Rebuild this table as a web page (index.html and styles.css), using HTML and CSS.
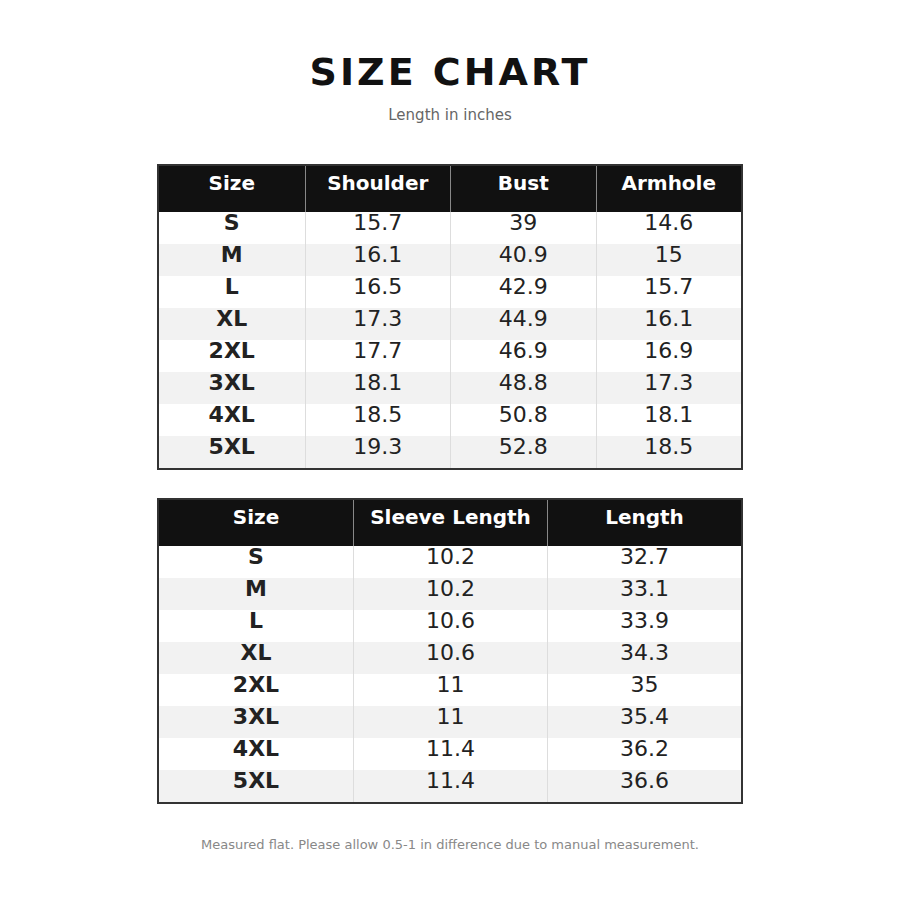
FILE: index.html
```html
<!DOCTYPE html>
<html lang="en">
<head>
  <meta charset="UTF-8">
  <meta name="viewport" content="width=device-width, initial-scale=1.0">
  <title>Size Chart</title>
  <link rel="stylesheet" href="styles.css">
</head>
<body>

<div class="chart">
  <h1 class="chart-title">SIZE CHART</h1>
  <p class="chart-subtitle">Length in inches</p>

  <table class="size-table">
    <thead>
      <tr>
        <th>Size</th>
        <th>Shoulder</th>
        <th>Bust</th>
        <th>Armhole</th>
      </tr>
    </thead>
    <tbody>
      <tr><td class="size">S</td><td>15.7</td><td>39</td><td>14.6</td></tr>
      <tr><td class="size">M</td><td>16.1</td><td>40.9</td><td>15</td></tr>
      <tr><td class="size">L</td><td>16.5</td><td>42.9</td><td>15.7</td></tr>
      <tr><td class="size">XL</td><td>17.3</td><td>44.9</td><td>16.1</td></tr>
      <tr><td class="size">2XL</td><td>17.7</td><td>46.9</td><td>16.9</td></tr>
      <tr><td class="size">3XL</td><td>18.1</td><td>48.8</td><td>17.3</td></tr>
      <tr><td class="size">4XL</td><td>18.5</td><td>50.8</td><td>18.1</td></tr>
      <tr><td class="size">5XL</td><td>19.3</td><td>52.8</td><td>18.5</td></tr>
    </tbody>
  </table>

  <table class="size-table">
    <thead>
      <tr>
        <th>Size</th>
        <th>Sleeve Length</th>
        <th>Length</th>
      </tr>
    </thead>
    <tbody>
      <tr><td class="size">S</td><td>10.2</td><td>32.7</td></tr>
      <tr><td class="size">M</td><td>10.2</td><td>33.1</td></tr>
      <tr><td class="size">L</td><td>10.6</td><td>33.9</td></tr>
      <tr><td class="size">XL</td><td>10.6</td><td>34.3</td></tr>
      <tr><td class="size">2XL</td><td>11</td><td>35</td></tr>
      <tr><td class="size">3XL</td><td>11</td><td>35.4</td></tr>
      <tr><td class="size">4XL</td><td>11.4</td><td>36.2</td></tr>
      <tr><td class="size">5XL</td><td>11.4</td><td>36.6</td></tr>
    </tbody>
  </table>

  <p class="chart-note">Measured flat. Please allow 0.5-1 in difference due to manual measurement.</p>
</div>

</body>
</html>
```

FILE: styles.css
```css
body {
  font-family: "DejaVu Sans", sans-serif;
  background-color: #fff;
  color: #222;
  margin: 0;
  padding: 0;
}

.chart {
  width: 900px;
  padding-top: 50px;
  text-align: center;
}

.chart-title {
  font-size: 38px;
  line-height: 44px;
  font-weight: bold;
  letter-spacing: 3px;
  color: #111;
  margin: 0;
}

.chart-subtitle {
  font-size: 15px;
  line-height: 20px;
  color: #666;
  margin: 11px 0 39px;
}

.size-table {
  width: 586px;
  margin: 0 auto 28px;
  border: 2px solid #333;
  border-spacing: 0;
  table-layout: fixed;
}

.size-table th {
  background-color: #111;
  color: #fff;
  font-size: 20px;
  line-height: 20px;
  font-weight: bold;
  padding: 7px 0 19px;
  vertical-align: top;
  border-left: 1px solid #888;
}

.size-table td {
  font-size: 22px;
  line-height: 20px;
  padding: 1px 0 11px;
  vertical-align: top;
  border-left: 1px solid #ddd;
}

.size-table th:first-child,
.size-table td:first-child {
  border-left: none;
}

.size-table tbody tr:nth-child(even) td {
  background-color: #f2f2f2;
}

.size-table .size {
  font-weight: bold;
}

.chart-note {
  font-size: 13px;
  line-height: 18px;
  color: #888;
  margin: 32px 0 0;
}
```
